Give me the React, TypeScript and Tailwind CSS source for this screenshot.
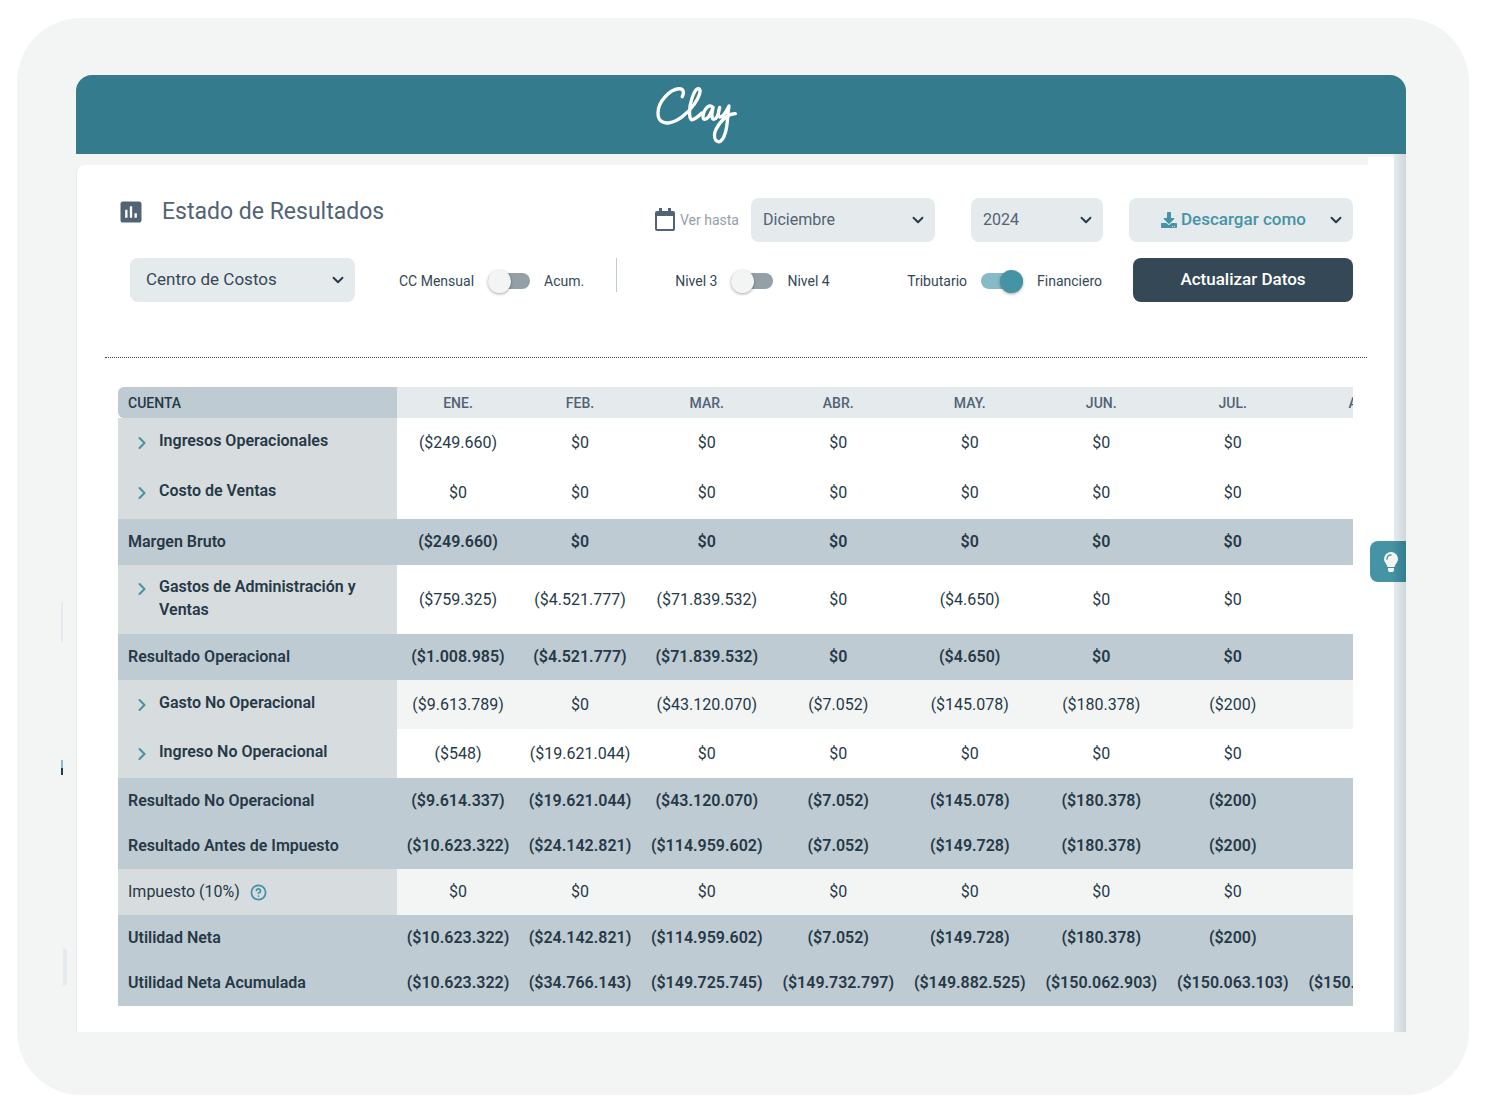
import { useState, type ReactNode } from "react";
import { ChevronDown, ChevronRight, CircleHelp } from "lucide-react";
import { FaDownload } from "react-icons/fa";
import { MdInsertChart } from "react-icons/md";
import clsx from "clsx";

type RowKind = "group" | "total" | "plain";

interface Row {
  label: string;
  kind: RowKind;
  height: string;
  striped?: boolean;
  values: string[];
}

const MONTHS = ["ENE.", "FEB.", "MAR.", "ABR.", "MAY.", "JUN.", "JUL.", "AGO."];

const ROWS: Row[] = [
  {
    label: "Ingresos Operacionales",
    kind: "group",
    height: "h-[49px]",
    values: ["($249.660)", "$0", "$0", "$0", "$0", "$0", "$0", ""],
  },
  {
    label: "Costo de Ventas",
    kind: "group",
    height: "h-[52px]",
    values: ["$0", "$0", "$0", "$0", "$0", "$0", "$0", ""],
  },
  {
    label: "Margen Bruto",
    kind: "total",
    height: "h-[46px]",
    values: ["($249.660)", "$0", "$0", "$0", "$0", "$0", "$0", ""],
  },
  {
    label: "Gastos de Administración y Ventas",
    kind: "group",
    height: "h-[69px]",
    values: ["($759.325)", "($4.521.777)", "($71.839.532)", "$0", "($4.650)", "$0", "$0", ""],
  },
  {
    label: "Resultado Operacional",
    kind: "total",
    height: "h-[46px]",
    values: ["($1.008.985)", "($4.521.777)", "($71.839.532)", "$0", "($4.650)", "$0", "$0", ""],
  },
  {
    label: "Gasto No Operacional",
    kind: "group",
    height: "h-[49px]",
    striped: true,
    values: ["($9.613.789)", "$0", "($43.120.070)", "($7.052)", "($145.078)", "($180.378)", "($200)", ""],
  },
  {
    label: "Ingreso No Operacional",
    kind: "group",
    height: "h-[49px]",
    values: ["($548)", "($19.621.044)", "$0", "$0", "$0", "$0", "$0", ""],
  },
  {
    label: "Resultado No Operacional",
    kind: "total",
    height: "h-[45px]",
    values: ["($9.614.337)", "($19.621.044)", "($43.120.070)", "($7.052)", "($145.078)", "($180.378)", "($200)", ""],
  },
  {
    label: "Resultado Antes de Impuesto",
    kind: "total",
    height: "h-[46px]",
    values: ["($10.623.322)", "($24.142.821)", "($114.959.602)", "($7.052)", "($149.728)", "($180.378)", "($200)", ""],
  },
  {
    label: "Impuesto (10%)",
    kind: "plain",
    height: "h-[46px]",
    striped: true,
    values: ["$0", "$0", "$0", "$0", "$0", "$0", "$0", ""],
  },
  {
    label: "Utilidad Neta",
    kind: "total",
    height: "h-[45px]",
    values: ["($10.623.322)", "($24.142.821)", "($114.959.602)", "($7.052)", "($149.728)", "($180.378)", "($200)", ""],
  },
  {
    label: "Utilidad Neta Acumulada",
    kind: "total",
    height: "h-[46px]",
    values: [
      "($10.623.322)",
      "($34.766.143)",
      "($149.725.745)",
      "($149.732.797)",
      "($149.882.525)",
      "($150.062.903)",
      "($150.063.103)",
      "($150.063.103)",
    ],
  },
];

function Logo() {
  return (
    <svg
      role="img"
      aria-label="Clay"
      viewBox="45 33 250 180"
      className="w-[83px] h-[60px] text-white"
      fill="none"
      stroke="currentColor"
      strokeWidth={10}
      strokeLinecap="round"
      strokeLinejoin="round"
    >
      <path d="M127 68C134 53 131 43 116 44C90 46 54 83 54 116C54 139 66 148 84 147C110 145 142 121 163 91C178 69 187 45 176 44C163 43 149 88 149 114C149 128 151 139 158 137C168 135 176 127 186 117" />
      <path d="M219 101C215 92 205 95 198 104C189 115 186 137 195 136C206 135 215 114 220 100C216 116 214 136 222 136C231 136 237 117 240 100C234 117 234 131 242 129C252 127 262 108 268 96C263 121 265 153 256 179C249 202 237 209 228 199C216 181 233 151 256 131C266 123 276 119 287 119" />
    </svg>
  );
}

function CalendarIcon() {
  return (
    <svg viewBox="0 0 20 24" className="w-5 h-6 text-[#526375]" aria-hidden="true">
      <path
        fill="currentColor"
        d="M4 0h3v3h6V0h3v3h2a2 2 0 0 1 2 2v16a2 2 0 0 1-2 2H2a2 2 0 0 1-2-2V5a2 2 0 0 1 2-2h2zM2 8v13h16V8z"
      />
    </svg>
  );
}

function BulbIcon() {
  return (
    <svg viewBox="0 0 14 20" className="w-3.5 h-5" aria-hidden="true">
      <path
        fill="#f3f5f5"
        d="M7 0a7 7 0 0 1 7 7c0 3-2.5 4.500-3.500 8h-7C2.500 11.500 0 10 0 7a7 7 0 0 1 7-7zM4 16h6v2.500L9 20H5l-1-1.500z"
      />
      <path d="M3 7a4 4 0 0 1 4-4" fill="none" stroke="#4594a5" strokeWidth={1.5} strokeLinecap="round" />
    </svg>
  );
}

interface SelectProps {
  label: string;
  options: string[];
  className: string;
}

function Select({ label, options, className }: SelectProps) {
  return (
    <div className={clsx("relative h-11", className)}>
      <select
        aria-label={label}
        className="appearance-none w-full h-full pr-8 rounded-lg bg-[#e5eaec] cursor-pointer"
      >
        {options.map((option) => (
          <option key={option}>{option}</option>
        ))}
      </select>
      <ChevronDown
        size={18}
        strokeWidth={2.5}
        className="absolute right-2 top-[13px] text-[#263947] pointer-events-none"
      />
    </div>
  );
}

interface ToggleProps {
  before: string;
  after: string;
  defaultChecked?: boolean;
}

function Toggle({ before, after, defaultChecked = false }: ToggleProps) {
  const [checked, setChecked] = useState(defaultChecked);

  return (
    <label className="flex items-center pt-0.5 whitespace-nowrap text-sm text-[#344856] cursor-pointer">
      <span>{before}</span>
      <input
        type="checkbox"
        checked={checked}
        onChange={(e) => setChecked(e.target.checked)}
        className="sr-only"
      />
      <span
        className={clsx(
          "mx-3.5 w-[42px] h-4 rounded-full flex items-center",
          checked ? "bg-[#86bac6] justify-end" : "bg-[#93a0a8]"
        )}
      >
        <span
          className={clsx(
            "size-[23px] rounded-full shadow-[0_1px_3px_rgba(0,0,0,0.35)]",
            checked ? "bg-[#4594a5]" : "bg-[#f3f5f5]"
          )}
        />
      </span>
      <span>{after}</span>
    </label>
  );
}

function RowLabel({ row }: { row: Row }) {
  let content: ReactNode = row.label;

  if (row.kind === "group") {
    content = (
      <div className="flex items-start pl-1">
        <button aria-label={`Expandir ${row.label}`} className="mt-1 mr-[7px] text-[#4594a5] cursor-pointer">
          <ChevronRight size={20} strokeWidth={2.5} />
        </button>
        <span className="leading-[23px]">{row.label}</span>
      </div>
    );
  }

  if (row.kind === "plain") {
    content = (
      <div className="flex items-center gap-2.5">
        <span>{row.label}</span>
        <button aria-label="Ayuda" className="text-[#4594a5] cursor-pointer">
          <CircleHelp size={17} strokeWidth={2.5} />
        </button>
      </div>
    );
  }

  return (
    <th
      scope="row"
      className={clsx(
        "pl-2.5 pr-8 text-left",
        row.kind === "total" ? "bg-[#bfcbd3]" : "bg-[#d7dcdf]",
        row.kind === "plain" ? "font-normal" : "font-semibold",
        row.kind === "group" && "pb-1"
      )}
    >
      {content}
    </th>
  );
}

function ResultsTable() {
  return (
    <div className="overflow-hidden">
      <table className="table-fixed w-[1312px] text-base text-[#263947]">
        <colgroup>
          <col className="w-[279px]" />
          <col className="w-[122px]" />
          <col className="w-[122px]" />
          {MONTHS.slice(2).map((month) => (
            <col key={month} />
          ))}
        </colgroup>
        <thead>
          <tr className="h-[31px] text-sm bg-[#e5eaec] text-[#526375]">
            <th scope="col" className="pl-2.5 text-left font-medium rounded-l-md bg-[#bfcbd3] text-[#263947]">
              CUENTA
            </th>
            {MONTHS.map((month) => (
              <th key={month} scope="col" className="font-medium">
                {month}
              </th>
            ))}
          </tr>
        </thead>
        <tbody>
          {ROWS.map((row) => (
            <tr
              key={row.label}
              className={clsx(
                row.height,
                row.kind === "total" && "bg-[#bfcbd3] font-semibold",
                row.striped && "bg-[#f3f5f5]"
              )}
            >
              <RowLabel row={row} />
              {row.values.map((value, idx) => (
                <td key={idx} className="text-center whitespace-nowrap">
                  {value}
                </td>
              ))}
            </tr>
          ))}
        </tbody>
      </table>
    </div>
  );
}

function App() {
  return (
    <div className="bg-white pt-[18px] pb-4 pl-[17px] pr-[26px] font-[Roboto,sans-serif]">
      <div className="relative rounded-[64px] bg-[#f3f5f5] pt-[57px] pb-[63px] pl-[59px] pr-[63px]">
        {/* Edge marks of the panel behind */}
        <span className="absolute left-11 top-[584px] w-0.5 h-10 bg-[#e4eaed]" />
        <span className="absolute left-11 top-[742px] w-0.5 h-[9px] bg-[#86bac6]" />
        <span className="absolute left-11 top-[750px] w-0.5 h-[7px] bg-[#263947]" />
        <span className="absolute left-[46px] top-[930px] w-1 h-[38px] rounded-r bg-[#e4eaed]" />

        {/* Header */}
        <header className="h-[79px] rounded-t-2xl bg-[#347b8e] flex justify-center pt-2.5 pr-[90px]">
          <Logo />
        </header>

        <div className="relative flex">
          <main className="relative mt-[11px] flex-1 min-w-0 bg-white rounded-tl-lg border-l border-[#e4eaed] pl-7 pr-[27px] pb-[26px]">
            <span className="absolute right-0 -top-2 w-[26px] h-2 bg-white" />

            {/* Toolbar */}
            <div className="flex items-start pt-[33px] pl-3 pr-3.5">
              <div className="flex items-center text-[#526375]">
                <MdInsertChart size={28} />
                <h1 className="ml-[17px] text-[23px] leading-7 whitespace-nowrap">Estado de Resultados</h1>
              </div>
              <div className="ml-auto h-11 flex items-center">
                <CalendarIcon />
                <span className="ml-[5px] mr-3 text-sm text-[#93a0a8] whitespace-nowrap">Ver hasta</span>
                <Select
                  label="Ver hasta mes"
                  options={["Diciembre", "Noviembre", "Octubre"]}
                  className="w-[184px] [&>select]:pl-3 text-base text-[#526375]"
                />
                <Select
                  label="Año"
                  options={["2024", "2023", "2022"]}
                  className="ml-9 w-[132px] [&>select]:pl-3 text-base text-[#526375]"
                />
                <button className="ml-[26px] w-56 h-11 pl-8 pr-2 rounded-lg bg-[#e5eaec] flex items-center text-[17px] font-medium text-[#4594a5] cursor-pointer">
                  <FaDownload size={16} className="mr-1" />
                  <span>Descargar como</span>
                  <ChevronDown size={18} strokeWidth={2.5} className="ml-auto text-[#263947]" />
                </button>
              </div>
            </div>

            <div className="flex items-center mt-4 pl-[25px] pr-3.5">
              <Select
                label="Centro de Costos"
                options={["Centro de Costos"]}
                className="w-[225px] [&>select]:pl-4 text-[17px] text-[#344856]"
              />
              <div className="ml-11">
                <Toggle before="CC Mensual" after="Acum." />
              </div>
              <div className="ml-8 mb-2.5 w-px h-[34px] bg-[#bfcbd3]" />
              <div className="ml-[58px]">
                <Toggle before="Nivel 3" after="Nivel 4" />
              </div>
              <div className="ml-auto mr-[31px]">
                <Toggle before="Tributario" after="Financiero" defaultChecked />
              </div>
              <button className="w-[220px] h-11 rounded-lg bg-[#344856] text-white text-[17px] font-medium cursor-pointer">
                Actualizar Datos
              </button>
            </div>

            <hr className="mt-[55px] border-0 border-t border-dotted border-[#344856]" />

            <div className="mt-[29px] pl-[13px] pr-3.5">
              <ResultsTable />
            </div>
          </main>

          {/* Scroll track */}
          <div className="w-3 bg-linear-to-r from-[#e4eaed] to-[#d0d7da]" />

          <button
            aria-label="Sugerencias"
            className="absolute right-0 top-[387px] w-9 h-[41px] pl-1.5 rounded-l-lg bg-linear-to-r from-[#4594a5] from-60% to-[#347b8e] flex items-center justify-center cursor-pointer"
          >
            <BulbIcon />
          </button>
        </div>
      </div>
    </div>
  );
}

export default App;
